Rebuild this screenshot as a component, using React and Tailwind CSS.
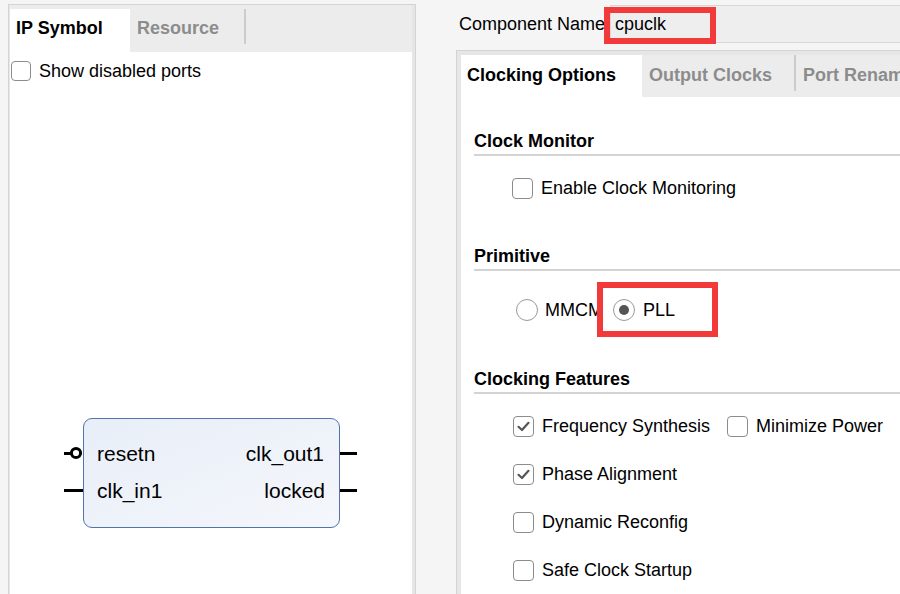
import React from "react";

function CheckBox({ checked }) {
  return (
    <div className="w-[21px] h-[21px] shrink-0 rounded-[4px] border-[1.5px] border-[#8c8c8c] bg-white flex items-center justify-center">
      {checked && (
        <svg width="15" height="15" viewBox="0 0 15 15">
          <path d="M2.5 7.8 L6 11 L12.5 3.8" fill="none" stroke="#555555" strokeWidth="2.2" strokeLinecap="round" strokeLinejoin="round" />
        </svg>
      )}
    </div>
  );
}

function Radio({ selected }) {
  return (
    <div className="w-[22px] h-[22px] shrink-0 rounded-full border-[1.5px] border-[#9a9a9a] bg-white flex items-center justify-center">
      {selected && <div className="w-[10px] h-[10px] rounded-full bg-[#555555]" />}
    </div>
  );
}

function CheckRow({ label, checked, className = "" }) {
  return (
    <div className={"flex items-center h-[22px] " + className}>
      <CheckBox checked={checked} />
      <span className="ml-2 whitespace-nowrap">{label}</span>
    </div>
  );
}

function Section({ title, className = "" }) {
  return (
    <div className={className}>
      <div className="font-bold h-[22px] leading-[22px] whitespace-nowrap">{title}</div>
      <div className="mt-[2px] h-[2px] bg-[#d3d3d3]" />
    </div>
  );
}

export default function App() {
  return (
    <div className="relative w-[900px] h-[594px] overflow-hidden bg-[#f5f5f5] flex font-['Liberation_Sans',Arial,sans-serif] text-[18px] text-black">
      {/* Left panel */}
      <div className="ml-2 mt-1 w-[408px] h-[620px] shrink-0 border border-[#d4d4d4] bg-[#e6e6e6] pl-px pr-[3px] flex flex-col">
        <div className="h-[47px] bg-[#ececec] flex items-end">
          <div className="h-[43px] w-[120px] shrink-0 bg-white pl-[6px] pb-1 flex items-center font-bold whitespace-nowrap">IP Symbol</div>
          <div className="h-[43px] w-[114px] shrink-0 pl-[7px] pb-1 flex items-center font-bold text-[#8c8c8c] whitespace-nowrap">Resource</div>
          <div className="h-[43px] flex items-start shrink-0">
            <div className="w-[2px] h-[35px] bg-[#cccccc]" />
          </div>
        </div>
        <div className="relative flex-1 bg-white">
          <div className="mt-[9px] ml-px flex items-center h-[20px]">
            <div className="w-[20px] h-[20px] shrink-0 rounded-[4px] border-[1.5px] border-[#8c8c8c] bg-white" />
            <span className="ml-2 whitespace-nowrap">Show disabled ports</span>
          </div>

          {/* IP symbol (diagram node) */}
          <div className="absolute left-[73px] top-[366px] w-[257px] h-[110px]">
            <div className="absolute inset-0 rounded-[9px] border border-[#4f74ae] bg-gradient-to-br from-[#e8eef8] to-[#f4f7fb]" />
            <div className="absolute left-[14px] top-[24px] text-[21px] leading-[24px] whitespace-nowrap">resetn</div>
            <div className="absolute left-[14px] top-[61px] text-[21px] leading-[24px] whitespace-nowrap">clk_in1</div>
            <div className="absolute right-[16px] top-[24px] text-[21px] leading-[24px] whitespace-nowrap">clk_out1</div>
            <div className="absolute right-[15px] top-[61px] text-[21px] leading-[24px] whitespace-nowrap">locked</div>
            {/* pins */}
            <div className="absolute left-[-19px] top-[34px] w-[8px] h-[3px] bg-black" />
            <svg className="absolute left-[-14px] top-[28px]" width="14" height="14" viewBox="0 0 14 14">
              <circle cx="7" cy="7" r="4.6" fill="white" stroke="black" strokeWidth="3" />
            </svg>
            <div className="absolute left-[-19px] top-[71px] w-[19px] h-[3px] bg-black" />
            <div className="absolute left-[257px] top-[34px] w-[17px] h-[3px] bg-black" />
            <div className="absolute left-[257px] top-[71px] w-[17px] h-[3px] bg-black" />
          </div>
        </div>
      </div>

      {/* Right column */}
      <div className="ml-10 pt-[5px] w-[470px] shrink-0 flex flex-col">
        <div className="h-[38px] flex items-center pl-[3px]">
          <span className="w-[151px] shrink-0 whitespace-nowrap">Component Name</span>
          <div className="flex-1 h-[38px] bg-[#eeeeee] border border-[#d6d6d6] pl-[4px] flex items-center">cpuclk</div>
        </div>

        <div className="mt-[7px] flex-1 border-l border-t border-[#d4d4d4] bg-[#e6e6e6] pl-1 pt-1 flex flex-col">
          <div className="h-[42px] bg-[#ececec] flex overflow-hidden">
            <div className="w-[181px] shrink-0 bg-white pl-[6px] pb-[2px] flex items-center font-bold whitespace-nowrap">Clocking Options</div>
            <div className="w-[152px] shrink-0 pl-[7px] pb-[2px] flex items-center font-bold text-[#8c8c8c] whitespace-nowrap">Output Clocks</div>
            <div className="w-[2px] h-[36px] shrink-0 bg-[#cccccc]" />
            <div className="shrink-0 pl-[7px] pb-[2px] flex items-center font-bold text-[#8c8c8c] whitespace-nowrap">Port Renaming</div>
          </div>

          <div className="flex-1 bg-white pl-[13px] flex flex-col">
            <Section title="Clock Monitor" className="mt-[33px]" />
            <CheckRow label="Enable Clock Monitoring" className="mt-[21px] ml-[38px]" />

            <Section title="Primitive" className="mt-[46px]" />
            <div className="mt-[28px] ml-[42px] flex items-center h-[22px]">
              <div className="w-[97px] flex items-center">
                <Radio />
                <span className="ml-[7px] whitespace-nowrap">MMCM</span>
              </div>
              <div className="flex items-center">
                <Radio selected />
                <span className="ml-[8px] whitespace-nowrap">PLL</span>
              </div>
            </div>

            <Section title="Clocking Features" className="mt-[47px]" />
            <div className="mt-[21px] ml-[39px] flex items-center h-[22px]">
              <CheckRow label="Frequency Synthesis" checked className="w-[214px] shrink-0" />
              <CheckRow label="Minimize Power" />
            </div>
            <CheckRow label="Phase Alignment" checked className="mt-[26px] ml-[39px]" />
            <CheckRow label="Dynamic Reconfig" className="mt-[26px] ml-[39px]" />
            <CheckRow label="Safe Clock Startup" className="mt-[26px] ml-[39px]" />
          </div>
        </div>
      </div>

      {/* red annotation boxes */}
      <div className="absolute left-[604px] top-[7px] w-[112px] h-[37px] border-[6px] border-[#f23a3a]" />
      <div className="absolute left-[597px] top-[282px] w-[121px] h-[55px] border-[6px] border-[#f23a3a]" />
    </div>
  );
}
